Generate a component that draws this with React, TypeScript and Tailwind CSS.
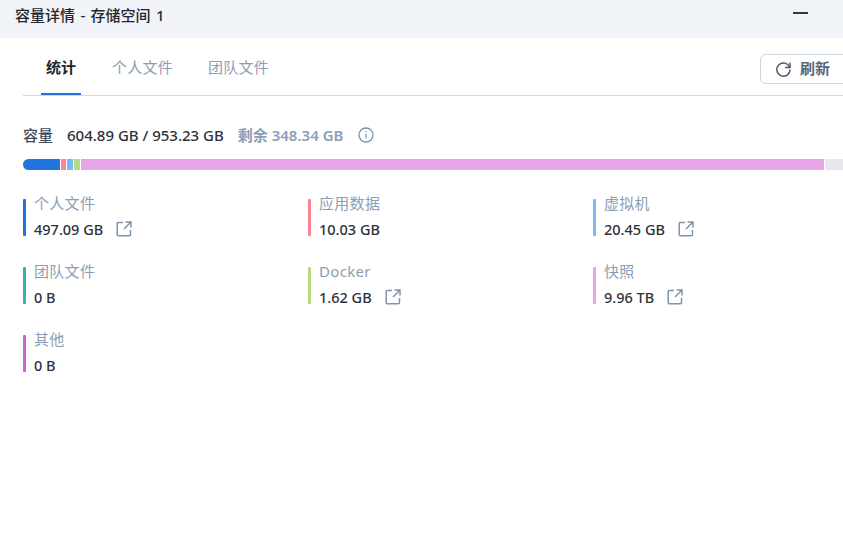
import React from "react";

function ExtIcon() {
  return (
    <svg width="16" height="16" viewBox="0 0 16 16" fill="none" stroke="#8093ad" strokeWidth="1.5" className="shrink-0">
      <path d="M7 1.5H2.2a1 1 0 0 0-1 1v11.3a1 1 0 0 0 1 1h11.3a1 1 0 0 0 1-1V9" />
      <path d="M9.5 1H15v5.5M15 1L8 8" />
    </svg>
  );
}

function Stat({ label, value, color, link }: { label: string; value: string; color: string; link?: boolean }) {
  return (
    <div className="flex h-[37px] gap-[8px]">
      <div className={`w-[3px] h-[37px] rounded-[1px] ${color}`} />
      <div className="flex flex-col">
        <div className="text-[15px] leading-[20px] tracking-[0.3px] text-[#8c9db5] mt-[-6px]">{label}</div>
        <div className="flex items-center gap-[13px] h-[20px] mt-[6px] text-[14.5px] leading-[20px] font-medium text-[#2d3138]">
          <span>{value}</span>
          {link && <ExtIcon />}
        </div>
      </div>
    </div>
  );
}

export default function App() {
  return (
    <div className="w-[843px] h-[539px] overflow-hidden bg-white font-['Noto_Sans','Noto_Sans_CJK_SC',sans-serif]">
      <div className="h-[38px] bg-[#f0f3f8] flex items-center justify-between pl-[15px] pr-[35px] pb-[9px]">
        <div className="text-[15px] leading-[20px] font-medium text-[#23262b] [word-spacing:1.5px]">容量详情 - 存储空间 1</div>
        <div className="w-[15px] h-[2px] bg-[#33383f] mt-[-3px]" />
      </div>
      <div className="ml-[23px] w-[840px]">
        <div className="h-[58px] flex border-b border-[#cdd6e2] relative">
          <div className="w-[58px] h-[57px] flex justify-end pt-[19px] text-[15px] leading-[20px] font-semibold text-[#23262b] relative pr-[5px]">
            <span>统计</span>
            <div className="absolute left-[18px] bottom-0 w-[40px] h-[2px] bg-[#1f74e0]" />
          </div>
          <div className="ml-[31px] pt-[19px] text-[15px] leading-[20px] tracking-[0.25px] text-[#8c9db5]">个人文件</div>
          <div className="ml-[35px] pt-[19px] text-[15px] leading-[20px] tracking-[0.25px] text-[#8c9db5]">团队文件</div>
          <div className="absolute left-[737px] top-[16px] w-[90px] h-[30px] border border-[#cdd6e2] rounded-[6px] flex items-center pl-[14px] gap-[8px] text-[15px] leading-[20px] font-semibold text-[#5a6678] bg-white">
            <svg width="17" height="17" viewBox="0 0 17 17" fill="none" stroke="#4d5868" strokeWidth="1.4">
              <path d="M14.6 6.3A6.6 6.6 0 1 0 15 8.5" />
              <path d="M15 1.6v4.9h-4.9" />
            </svg>
            <span className="mt-[-2px]">刷新</span>
          </div>
        </div>
        <div className="flex items-center h-[20px] mt-[30px] text-[15px] leading-[20px] font-medium">
          <span className="text-[#3f4a5a] mt-[-2px]">容量</span>
          <span className="ml-[14px] text-[#2d3138] mt-[-2px]">604.89 GB / 953.23 GB</span>
          <span className="ml-[14px] text-[#8c9db5] font-semibold mt-[-2px]">剩余 348.34 GB</span>
          <svg className="ml-[15px] mt-[-2px]" width="16" height="16" viewBox="0 0 16 16" fill="none" stroke="#8093ad" strokeWidth="1.3">
            <circle cx="8" cy="8" r="7" />
            <path d="M8 7v4.5M8 4.2v1.4" />
          </svg>
        </div>
        <div className="flex h-[11px] mt-[13px] w-[820px] rounded-l-full overflow-hidden gap-[1px] bg-white">
          <div className="w-[37px] bg-[#1f74e0]" />
          <div className="w-[5px] bg-[#fa8595]" />
          <div className="w-[6px] bg-[#78b8f5]" />
          <div className="w-[6px] bg-[#b7d983]" />
          <div className="w-[743px] bg-[#e8a5e5]" />
          <div className="flex-1 bg-[#e6e8ec]" />
        </div>
        <div className="grid grid-cols-[285px_285px_285px] gap-y-[31px] mt-[29px]">
          <Stat label="个人文件" value="497.09 GB" color="bg-[#1f74e0]" link />
          <Stat label="应用数据" value="10.03 GB" color="bg-[#fa8595]" />
          <Stat label="虚拟机" value="20.45 GB" color="bg-[#78b8f5]" link />
          <Stat label="团队文件" value="0 B" color="bg-[#36b3a8]" />
          <Stat label="Docker" value="1.62 GB" color="bg-[#b7d983]" link />
          <Stat label="快照" value="9.96 TB" color="bg-[#e8a5e5]" link />
          <Stat label="其他" value="0 B" color="bg-[#cf5fd2]" />
        </div>
      </div>
    </div>
  );
}
